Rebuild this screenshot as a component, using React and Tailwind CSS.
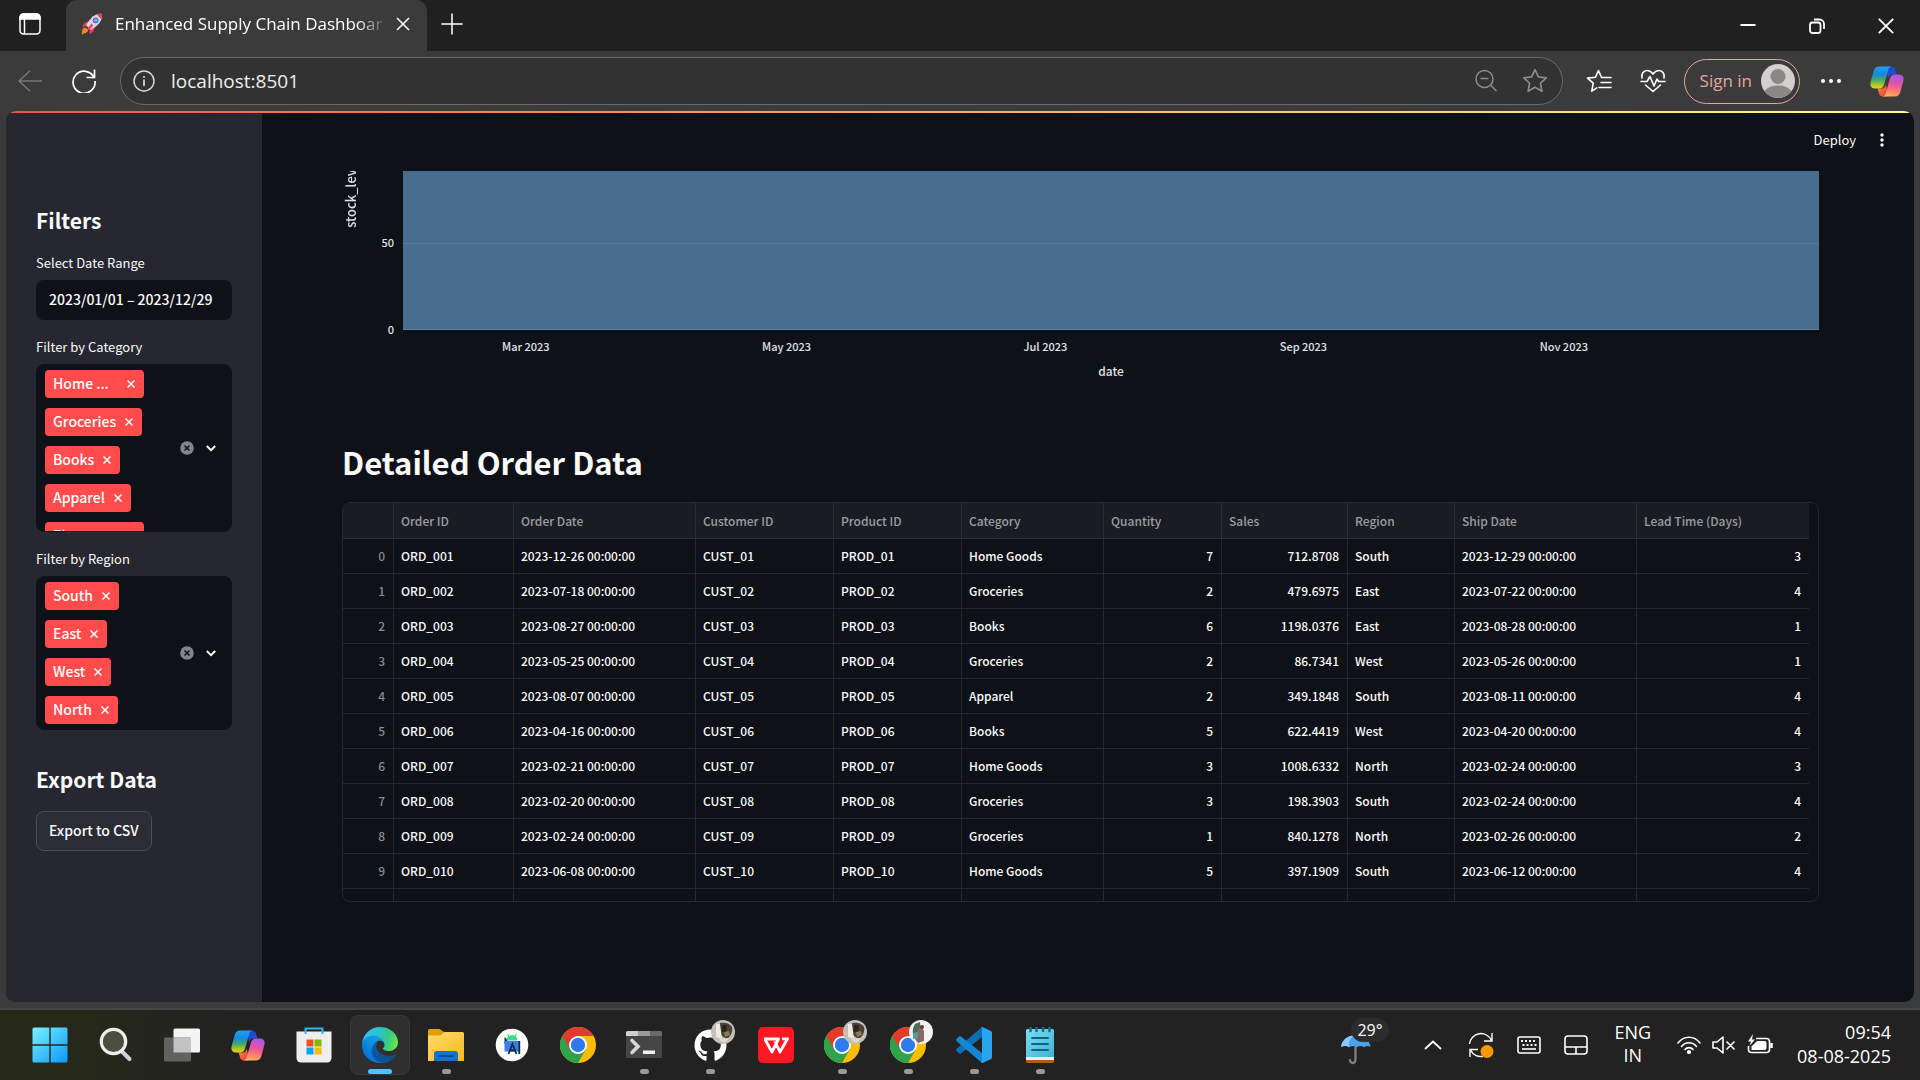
import React, { useId } from "react";
import { FaGithub } from "react-icons/fa";

const UI = "font-['Open_Sans','Noto_Sans',sans-serif]";

function CopilotLogo({ className }) {
  const id = useId();
  const a = `a${id}`, b = `b${id}`, c = `c${id}`, d = `d${id}`;
  return (
    <svg viewBox="0 0 34 31" className={className} aria-hidden="true">
      <defs>
        <linearGradient id={a} x1="0" y1="0" x2="0" y2="1">
          <stop offset="0" stopColor="#1ea2f0" />
          <stop offset="0.35" stopColor="#1b86dc" />
          <stop offset="0.6" stopColor="#3fa873" />
          <stop offset="0.82" stopColor="#a5c52e" />
          <stop offset="1" stopColor="#f5d50a" />
        </linearGradient>
        <linearGradient id={b} x1="0" y1="0" x2="1" y2="1">
          <stop offset="0" stopColor="#1b3fc4" />
          <stop offset="1" stopColor="#1a5fe0" />
        </linearGradient>
        <linearGradient id={c} x1="0.6" y1="0" x2="0.4" y2="1">
          <stop offset="0" stopColor="#a855f0" />
          <stop offset="0.45" stopColor="#e8559b" />
          <stop offset="0.75" stopColor="#ff7f70" />
          <stop offset="1" stopColor="#ffb057" />
        </linearGradient>
        <linearGradient id={d} x1="0" y1="0" x2="1" y2="1">
          <stop offset="0" stopColor="#ff8a4c" />
          <stop offset="1" stopColor="#e23a2f" />
        </linearGradient>
      </defs>
      <path d="M16 .5h5.500c2 0 3 1.500 3.600 3.500l1.300 4.500h-4c-2.400 0-3.600 1.500-4.300 4z" fill={`url(#${b})`} />
      <path d="M18 30.500h-5.500c-2 0-3-1.500-3.600-3.500l-1.300-4.500h4c2.400 0 3.600-1.500 4.300-4z" fill={`url(#${d})`} />
      <path d="M9.500.5h12c-1.800.3-2.700 1.500-3.300 3.500l-4 14c-.9 3-2.200 4.500-5 4.500H5c-4 0-5.300-2.700-4.300-6.500L3.500 5.500C4.400 2.300 6 .5 9.500.5z" fill={`url(#${a})`} />
      <path d="M24.500 30.500h-12c1.800-.3 2.700-1.500 3.300-3.500l4-14c.9-3 2.200-4.500 5-4.500H29c4 0 5.300 2.700 4.300 6.500l-2.800 10.500c-.9 3.200-2.500 5-6 5z" fill={`url(#${c})`} />
    </svg>
  );
}

function Rocket() {
  return (
    <svg viewBox="0 0 22 22" className="size-[22px] shrink-0" aria-hidden="true">
      <path d="M2 15.500c1.800-1.200 3.800-.6 4.700.8.800 1.400.1 2.800-1.500 3.500-1.300.6-3 .9-4.400 2C1 19.500.8 17 2 15.500z" fill="#f28a1c" />
      <path d="M8 8.200c-3 .1-5.500 2-6.700 5.600 2-.8 3.800-.7 5.200.1zM13.700 14c-.1 3-2 5.500-5.500 7.500.7-2.300.6-4.200-.2-5.800z" fill="#f03a5f" />
      <path d="M21 .8C14.500.5 9.800 3.500 5.300 12.200l4.400 4.600C18.500 12.300 21.500 7 21 .8z" fill="#dcd3e2" />
      <path d="M21 .8c-2-.1-3.700.1-5.300.8l4.400 4.500c.8-1.700 1-3.400.9-5.300z" fill="#f03a5f" />
      <circle cx="14.600" cy="7.300" r="2.900" fill="#4f6fb8" />
      <circle cx="14.600" cy="7.300" r="1.800" fill="#5fb8f2" />
      <path d="M10.800 10.500c-1.800 1.700-3.600 4-4.500 7 2.700-1.200 4.500-3 5.800-5.300z" fill="#f03a5f" />
    </svg>
  );
}

function TitleBar() {
  return (
    <header className="flex h-[51px] shrink-0 items-stretch bg-[#202020]">
      <button aria-label="Tab actions" className="grid w-[66px] place-items-center pr-1.5 pb-1">
        <svg viewBox="0 0 22 22" className="size-[22px]" fill="none" stroke="#fff" strokeWidth="1.500">
          <rect x="1" y="1" width="20" height="20" rx="3.500" />
          <path d="M1 4.500A3.500 3.500 0 0 1 4.500 1h13A3.500 3.500 0 0 1 21 4.500V6H1z" fill="#fff" />
          <path d="M5.500 6v15" />
        </svg>
      </button>
      <div className="flex w-[361px] items-center rounded-t-[11px] bg-[#3b3b3b] pb-1 pl-[15px] pr-[17px]">
        <Rocket />
        <span className="ml-3 w-[268px] overflow-hidden whitespace-nowrap text-[17px] leading-6 text-white [mask-image:linear-gradient(to_right,#000_90%,transparent_102%)]">
          Enhanced Supply Chain Dashboar
        </span>
        <button aria-label="Close tab" className="ml-auto shrink-0">
          <svg viewBox="0 0 14 14" className="size-3.5" stroke="#fff" strokeWidth="1.500">
            <path d="M1 1l12 12M13 1L1 13" />
          </svg>
        </button>
      </div>
      <button aria-label="New tab" className="grid w-[50px] place-items-center pb-1">
        <svg viewBox="0 0 22 22" className="size-[22px]" stroke="#fff" strokeWidth="1.500">
          <path d="M11 .5v21M.5 11h21" />
        </svg>
      </button>
      <div className="ml-auto flex">
        <button aria-label="Minimize" className="grid w-[69px] place-items-center pb-0.5">
          <svg viewBox="0 0 16 16" className="size-4" stroke="#fff" strokeWidth="2"><path d="M.5 8h15" /></svg>
        </button>
        <button aria-label="Restore" className="grid w-[69px] place-items-center">
          <svg viewBox="0 0 16 16" className="size-4" fill="none" stroke="#fff" strokeWidth="1.800">
            <rect x="1" y="4.500" width="10.500" height="10.500" rx="2.500" />
            <path d="M5 1.500h5.500a4.500 4.500 0 0 1 4.500 4.500v5" />
          </svg>
        </button>
        <button aria-label="Close" className="grid w-[69px] place-items-center">
          <svg viewBox="0 0 16 16" className="size-4" stroke="#fff" strokeWidth="1.800"><path d="M.8.8l14.400 14.400M15.200.8L.8 15.200" /></svg>
        </button>
      </div>
    </header>
  );
}

const STAR = "M12 1.500l3.100 6.700 7.300.9-5.400 5 1.400 7.300L12 17.800l-6.400 3.600L7 14.100l-5.400-5 7.300-.9z";

function Toolbar() {
  return (
    <nav className="flex h-[60px] shrink-0 items-center bg-[#3b3b3b] pl-[18px] pr-[15px]">
      <button aria-label="Back" className="w-6">
        <svg viewBox="0 0 24 22" className="h-[22px] w-6" fill="none" stroke="#787878" strokeWidth="1.500">
          <path d="M24 11H1M12 .7L1 11l11 10.300" />
        </svg>
      </button>
      <button aria-label="Refresh" className="ml-[30px] w-6">
        <svg viewBox="0 0 24 24" className="size-6" fill="none" stroke="#fff" strokeWidth="1.700">
          <path d="M22 8.500A11 11 0 1 0 23 12M22.500.5v8h-8" />
        </svg>
      </button>
      <div className="ml-6 flex h-12 min-w-0 flex-1 items-center rounded-full border border-[#6a6a6a] bg-[#323232] pl-3 pr-[14px]">
        <svg viewBox="0 0 22 22" className="size-[22px] shrink-0" fill="none" stroke="#d6d6d6" strokeWidth="1.500">
          <circle cx="11" cy="11" r="10" />
          <path d="M11 9.500V16M11 6v1.800" strokeWidth="1.800" />
        </svg>
        <input
          aria-label="Address"
          defaultValue="localhost:8501"
          className="ml-4 min-w-0 flex-1 bg-transparent text-[19px] leading-7 text-[#eeeeee] outline-none"
        />
        <button aria-label="Zoom" className="mr-6">
          <svg viewBox="0 0 24 24" className="size-6" fill="none" stroke="#8c8c8c" strokeWidth="1.500">
            <circle cx="10.500" cy="10" r="8.500" />
            <path d="M16.500 16l6 6M6.500 9.500h8" />
          </svg>
        </button>
        <button aria-label="Add to favorites">
          <svg viewBox="0 0 24 24" className="size-[26px]" fill="none" stroke="#8c8c8c" strokeWidth="1.500" strokeLinejoin="round">
            <path d={STAR} />
          </svg>
        </button>
      </div>
      <button aria-label="Favorites" className="ml-[23px]">
        <svg viewBox="0 0 26 24" className="h-6 w-[26px]" fill="none" stroke="#fff" strokeWidth="1.600" strokeLinejoin="round" strokeLinecap="round">
          <path d="M15.500 8.500L12.500 1.500 9.500 8.200l-8 .9 5.700 5-1.400 8 5-3.200M15.500 8.500h9.500M15 13.500h10M13 18.500h12" />
        </svg>
      </button>
      <button aria-label="Browser essentials" className="ml-7">
        <svg viewBox="0 0 26 24" className="h-6 w-[26px]" fill="none" stroke="#fff" strokeWidth="1.600" strokeLinejoin="round" strokeLinecap="round">
          <path d="M2 9C1 5 3.500 1.500 7 1.500c2.500 0 4.500 1.300 6 3.500 1.500-2.200 3.500-3.500 6-3.500 3.500 0 6 3.500 5 7.500M5.500 16l7.500 6.500 7.500-6.500M1 12.500h6l3-5 4 9.500 3-7 1.500 2.500H25" />
        </svg>
      </button>
      <button className="ml-[18px] flex h-[45px] items-center gap-[9px] rounded-full border border-[#e9a49d] pl-[15px] pr-1 text-[17px] text-[#e9a49d]">
        Sign in
        <svg viewBox="0 0 34 34" className="size-[34px]" aria-hidden="true">
          <circle cx="17" cy="17" r="17" fill="#d2d0ce" />
          <circle cx="17" cy="12.500" r="7.500" fill="#8a8886" />
          <path d="M3.500 27.300C6 23.500 11 21.500 17 21.500s11 2 13.500 5.800A17 17 0 0 1 3.500 27.300z" fill="#8a8886" />
        </svg>
      </button>
      <button aria-label="Settings and more" className="ml-[21px]">
        <svg viewBox="0 0 20 4" className="h-1 w-5" fill="#fff">
          <circle cx="2" cy="2" r="2" /><circle cx="10" cy="2" r="2" /><circle cx="18" cy="2" r="2" />
        </svg>
      </button>
      <button aria-label="Copilot" className="ml-[29px] mr-px">
        <CopilotLogo className="h-[31px] w-[34px]" />
      </button>
    </nav>
  );
}

function Tag({ label }) {
  return (
    <span className="flex h-7 shrink-0 items-center rounded bg-[#ff4b4b] pl-2 pr-[9px] text-[14px] leading-7 text-white">
      <span className={`pb-0.5 ${label.endsWith("...") ? "w-[65px]" : ""}`}>{label}</span>
      <button aria-label={`Remove ${label}`} className="ml-[9px]">
        <svg viewBox="0 0 8 8" className="size-2" stroke="#fff" strokeWidth="1.500"><path d="M.5.5l7 7M7.500.5l-7 7" /></svg>
      </button>
    </span>
  );
}

function MultiSelect({ label, values, clipped }) {
  return (
    <fieldset className="mt-[17px]">
      <legend className="text-[13px] font-normal leading-5">{label}</legend>
      <div
        className={`mt-[7px] flex items-center overflow-hidden rounded-lg border border-[#0e1117] bg-[#0e1117] pl-2 pr-[15px] ${clipped ? "h-[168px]" : ""}`}
      >
        <div className="flex flex-1 flex-col items-start gap-2.5 self-start py-[5px] font-medium">
          {values.map((v) => <Tag key={v} label={v} />)}
        </div>
        <button aria-label="Clear all">
          <svg viewBox="0 0 14 14" className="size-3.5">
            <circle cx="7" cy="7" r="6.800" fill="#808495" />
            <path d="M4.500 4.500l5 5M9.500 4.500l-5 5" stroke="#0e1117" strokeWidth="1.500" />
          </svg>
        </button>
        <button aria-label="Open" className="ml-3">
          <svg viewBox="0 0 10 7" className="h-[7px] w-2.5" fill="none" stroke="#fafafa" strokeWidth="2"><path d="M.8 1L5 5.200 9.200 1" /></svg>
        </button>
      </div>
    </fieldset>
  );
}

function Sidebar() {
  return (
    <aside className="w-64 shrink-0 bg-[#262730] px-[30px] pt-[91px] font-medium">
      <h2 className="text-[21px] font-semibold leading-8">Filters</h2>
      <label htmlFor="range" className="mt-[17px] block text-[13px] font-normal leading-5">Select Date Range</label>
      <input
        id="range"
        defaultValue="2023/01/01 – 2023/12/29"
        className="mt-[7px] block h-10 w-full rounded-lg bg-[#0e1117] px-[13px] pb-0.5 text-[14px] outline-none"
      />
      <MultiSelect label="Filter by Category" values={["Home ...", "Groceries", "Books", "Apparel", "Electro..."]} clipped />
      <MultiSelect label="Filter by Region" values={["South", "East", "West", "North"]} />
      <h2 className="mt-[33px] text-[21px] font-semibold leading-8">Export Data</h2>
      <button className="mt-4 h-10 rounded-lg border border-[#4c4d56] bg-[#2b2c36] px-3 pb-0.5 text-[14px] leading-6">Export to CSV</button>
    </aside>
  );
}

function Chart() {
  return (
    <figure className="flex items-start font-medium text-[#e0e1e6]" aria-label="Stock level over time">
      <div className="flex h-[57px] w-5 shrink-0 items-end overflow-hidden">
        <span className="rotate-180 whitespace-nowrap text-[13px] leading-[18px] [writing-mode:vertical-rl]">stock_level</span>
      </div>
      <div className="flex w-[41px] shrink-0 flex-col items-end gap-[71px] pr-[9px] pt-[63px] text-[11px] leading-4">
        <span>50</span>
        <span>0</span>
      </div>
      <div className="flex-1">
        <div className="h-[159px] border-b border-[#5a80a3] bg-[#496d8f]">
          <div className="h-[73px] border-b border-[#567a9c]" />
        </div>
        <div className="mt-2 flex justify-between pl-[99px] pr-[231px] text-[11px] leading-4">
          {["Mar 2023", "May 2023", "Jul 2023", "Sep 2023", "Nov 2023"].map((m) => <span key={m}>{m}</span>)}
        </div>
        <div className="mt-[9px] text-center text-[12px] leading-4">date</div>
      </div>
    </figure>
  );
}

const COLS = [
  ["", "w-[51px]"],
  ["Order ID", "w-[120px]"],
  ["Order Date", "w-[182px]"],
  ["Customer ID", "w-[138px]"],
  ["Product ID", "w-[128px]"],
  ["Category", "w-[142px]"],
  ["Quantity", "w-[118px]"],
  ["Sales", "w-[126px]"],
  ["Region", "w-[107px]"],
  ["Ship Date", "w-[182px]"],
  ["Lead Time (Days)", ""],
];

const T = " 00:00:00";
const ROWS = [
  ["0", "ORD_001", "2023-12-26" + T, "CUST_01", "PROD_01", "Home Goods", "7", "712.8708", "South", "2023-12-29" + T, "3"],
  ["1", "ORD_002", "2023-07-18" + T, "CUST_02", "PROD_02", "Groceries", "2", "479.6975", "East", "2023-07-22" + T, "4"],
  ["2", "ORD_003", "2023-08-27" + T, "CUST_03", "PROD_03", "Books", "6", "1198.0376", "East", "2023-08-28" + T, "1"],
  ["3", "ORD_004", "2023-05-25" + T, "CUST_04", "PROD_04", "Groceries", "2", "86.7341", "West", "2023-05-26" + T, "1"],
  ["4", "ORD_005", "2023-08-07" + T, "CUST_05", "PROD_05", "Apparel", "2", "349.1848", "South", "2023-08-11" + T, "4"],
  ["5", "ORD_006", "2023-04-16" + T, "CUST_06", "PROD_06", "Books", "5", "622.4419", "West", "2023-04-20" + T, "4"],
  ["6", "ORD_007", "2023-02-21" + T, "CUST_07", "PROD_07", "Home Goods", "3", "1008.6332", "North", "2023-02-24" + T, "3"],
  ["7", "ORD_008", "2023-02-20" + T, "CUST_08", "PROD_08", "Groceries", "3", "198.3903", "South", "2023-02-24" + T, "4"],
  ["8", "ORD_009", "2023-02-24" + T, "CUST_09", "PROD_09", "Groceries", "1", "840.1278", "North", "2023-02-26" + T, "2"],
  ["9", "ORD_010", "2023-06-08" + T, "CUST_10", "PROD_10", "Home Goods", "5", "397.1909", "South", "2023-06-12" + T, "4"],
  ["", "", "", "", "", "", "", "", "", "", ""],
];
const NUMERIC = [0, 6, 7, 10];

function OrderTable() {
  return (
    <div className="mt-[18px] h-[400px] overflow-hidden rounded-lg border border-[#26282d] pr-[9px]">
      <table className="w-full table-fixed border-separate border-spacing-0 whitespace-nowrap text-[12px] leading-5">
        <thead>
          <tr>
            {COLS.map(([name, w], i) => (
              <th key={i} className={`h-9 border-b border-[#2b2d33] bg-[#1a1c23] px-[7px] text-left font-medium text-[#9c9da1] ${i < 10 ? "border-r" : ""} ${w}`}>
                {name}
              </th>
            ))}
          </tr>
        </thead>
        <tbody className="font-medium">
          {ROWS.map((row, r) => (
            <tr key={r}>
              {row.map((cell, i) => (
                <td
                  key={i}
                  className={`h-[35px] border-b border-[#26282d] pl-[7px] pr-2 ${i < 10 ? "border-r" : ""} ${NUMERIC.includes(i) ? "text-right" : ""} ${i === 0 ? "text-[#8b8c91]" : "text-[#fafafa]"}`}
                >
                  {cell}
                </td>
              ))}
            </tr>
          ))}
        </tbody>
      </table>
    </div>
  );
}

function Page() {
  return (
    <div className="mx-1.5 flex min-h-0 flex-1 flex-col overflow-hidden rounded-[10px] bg-[#0e1117] font-['Noto_Sans_CJK_SC','Noto_Sans',sans-serif] text-[#fafafa]">
      <div className="h-0.5 shrink-0 bg-linear-to-r from-[#ff4b4b] to-[#fffd80]" />
      <div className="flex min-h-0 flex-1">
        <Sidebar />
        <main className="min-w-0 flex-1">
          <div className="flex h-[58px] items-center justify-end pr-[30px] pb-1">
            <button className="text-[13px] leading-5">Deploy</button>
            <button aria-label="Main menu" className="ml-6">
              <svg viewBox="0 0 4 14" className="h-3.5 w-1" fill="#fafafa">
                <circle cx="2" cy="2" r="1.700" /><circle cx="2" cy="7" r="1.700" /><circle cx="2" cy="12" r="1.700" />
              </svg>
            </button>
          </div>
          <div className="pl-20 pr-[95px]">
            <Chart />
            <h1 className="mt-[61px] text-[31px] font-semibold leading-[44px]">Detailed Order Data</h1>
            <OrderTable />
          </div>
        </main>
      </div>
    </div>
  );
}

function WindowsLogo() {
  const id = useId();
  return (
    <svg viewBox="0 0 36 36" className="size-9">
      <linearGradient id={id} gradientUnits="userSpaceOnUse" x1="0" y1="0" x2="36" y2="36">
        <stop offset="0" stopColor="#7af3ff" /><stop offset="1" stopColor="#0a95ff" />
      </linearGradient>
      <path fill={`url(#${id})`} d="M2 .5h15.300v16.800H.5V2A1.500 1.500 0 0 1 2 .5zM18.700.5H34A1.500 1.500 0 0 1 35.500 2v15.300H18.700zM.5 18.700h16.800v16.800H2A1.500 1.500 0 0 1 .5 34zM18.700 18.700h16.800V34a1.500 1.500 0 0 1-1.500 1.500H18.700z" />
    </svg>
  );
}

function SearchLogo() {
  return (
    <svg viewBox="0 0 36 36" className="size-9">
      <path d="M24.500 25l7 7" stroke="#d0d0dc" strokeWidth="4" strokeLinecap="round" />
      <circle cx="15.500" cy="14.500" r="12.200" fill="#4c4e40" stroke="#eceef0" strokeWidth="3.200" />
    </svg>
  );
}

function TaskViewLogo() {
  return (
    <svg viewBox="0 0 36 36" className="size-9">
      <rect x="9.500" y="1.500" width="26.500" height="24" rx="1.500" fill="#f4f4f4" />
      <rect x="0" y="10.500" width="27" height="24" rx="1.500" fill="#626262" />
      <path d="M9.500 10.500H27v15H9.500z" fill="#c2c2c2" />
    </svg>
  );
}

function StoreLogo() {
  return (
    <svg viewBox="0 0 36 36" className="size-9">
      <path d="M.5 4.500h35V31a4.500 4.500 0 0 1-4.500 4.500H5A4.500 4.500 0 0 1 .5 31z" fill="#eeeeee" />
      <path d="M9.500 7V1.500h17V7" fill="none" stroke="#35b3e6" strokeWidth="2" />
      <path d="M10.500 12.500h7v7h-7z" fill="#f25022" /><path d="M18.500 12.500h7v7h-7z" fill="#7fba00" />
      <path d="M10.500 20.500h7v7h-7z" fill="#00a4ef" /><path d="M18.500 20.500h7v7h-7z" fill="#ffb900" />
    </svg>
  );
}

function EdgeLogo() {
  const id = useId();
  return (
    <svg viewBox="0 0 256 256" className="size-9">
      <defs>
        <linearGradient id={`a${id}`} gradientUnits="userSpaceOnUse" x1="63" y1="178" x2="241" y2="178">
          <stop offset="0" stopColor="#0c59a4" /><stop offset="1" stopColor="#114a8b" />
        </linearGradient>
        <linearGradient id={`b${id}`} gradientUnits="userSpaceOnUse" x1="157" y1="100" x2="46" y2="221">
          <stop offset="0" stopColor="#1b9de2" /><stop offset="0.3" stopColor="#1595df" /><stop offset="1" stopColor="#0078d7" />
        </linearGradient>
        <linearGradient id={`c${id}`} gradientUnits="userSpaceOnUse" x1="10" y1="60" x2="250" y2="120">
          <stop offset="0" stopColor="#35c1f1" /><stop offset="0.4" stopColor="#2bc3d2" /><stop offset="0.7" stopColor="#36c98a" /><stop offset="1" stopColor="#66eb45" />
        </linearGradient>
      </defs>
      <path fill={`url(#a${id})`} d="M235.700 195.500a93.700 93.700 0 0 1-10.600 4.700 101.900 101.900 0 0 1-35.900 6.400c-47.300 0-88.500-32.500-88.500-74.300a31.500 31.500 0 0 1 16.400-27.300c-42.800 1.800-53.800 46.400-53.800 72.500 0 74 68.100 81.400 82.800 81.400 7.900 0 19.800-2.300 27-4.600l1.300-.4a128.300 128.300 0 0 0 66.600-52.800 4 4 0 0 0-5.300-5.600z" />
      <path fill={`url(#b${id})`} d="M105.700 241.400a79.200 79.200 0 0 1-22.700-21.300 80.700 80.700 0 0 1 29.500-120c3.200-1.500 8.500-4.100 15.600-4a32.400 32.400 0 0 1 25.700 13 31.900 31.900 0 0 1 6.300 18.700c0-.2 24.500-79.600-80-79.600-43.900 0-80 41.600-80 78.200a130.200 130.200 0 0 0 12.100 56 128 128 0 0 0 156.400 67 75.500 75.500 0 0 1-62.800-8z" />
      <path fill={`url(#c${id})`} d="M152.300 148.900c-.9 1-3.400 2.500-3.400 5.600 0 2.600 1.700 5.200 4.800 7.300 14.300 10 41.400 8.600 41.500 8.600a59.600 59.600 0 0 0 30.300-8.300 61.400 61.400 0 0 0 30.400-52.900c.3-22.400-8-37.300-11.300-43.900C223.300 23.900 177.400 0 128 0A128 128 0 0 0 0 126.200c.5-36.500 36.800-66 80-66 3.500 0 23.500.3 42 10.100a72.600 72.600 0 0 1 30.900 29.300c6.100 10.600 7.200 24.100 7.200 29.500s-2.700 13.300-7.800 19.800z" />
    </svg>
  );
}

function FolderLogo() {
  const id = useId();
  return (
    <svg viewBox="0 0 36 36" className="size-9">
      <defs>
        <linearGradient id={id} x1="0" y1="0" x2="1" y2="1">
          <stop offset="0" stopColor="#ffda70" /><stop offset="1" stopColor="#f9b91c" />
        </linearGradient>
      </defs>
      <path d="M0 3.500A1.500 1.500 0 0 1 1.500 2H11c2 0 3 2.500 5 3v4H0z" fill="#e0a000" />
      <path d="M0 8.500h12c1.500 0 3-3.500 5-3.500h17.500A1.500 1.500 0 0 1 36 6.500V34H0z" fill={`url(#${id})`} />
      <path d="M6 34V27a3 3 0 0 1 3-3h18a3 3 0 0 1 3 3v7z" fill="#1173cc" />
      <path d="M11 29h14" stroke="#0a4f96" strokeWidth="2" strokeLinecap="round" />
    </svg>
  );
}

function AndroidStudioLogo() {
  return (
    <svg viewBox="0 0 36 36" className="size-9">
      <circle cx="18" cy="18" r="16.300" fill="#fff" />
      <path d="M10.500 10l3 3v4h-3z" fill="#073042" />
      <path d="M10.500 14H26v10.500H10.500z" fill="#3f7ee8" />
      <path d="M12.500 13.500a5.500 5.500 0 0 1 11 0z" fill="#3ddc84" />
      <path d="M13.500 6.800l1.500 2.500M22.500 6.800l-1.500 2.500" stroke="#3ddc84" strokeWidth="1.200" />
      <path d="M14.500 27L18.500 17l4 10M16 23.500h5M25.300 14v13" stroke="#073042" strokeWidth="1.800" fill="none" />
    </svg>
  );
}

function Chrome() {
  return (
    <svg viewBox="0 0 36 36" className="size-9">
      <circle cx="18" cy="18" r="18" fill="#fbbc05" />
      <path d="M18 18L2.410 9A18 18 0 0 0 18 36l7.800-13.500z" fill="#2fa24c" />
      <path d="M2.410 9A18 18 0 0 1 33.590 9H18l-7.800 13.500z" fill="#e33b2e" />
      <circle cx="18" cy="18" r="9" fill="#fff" />
      <circle cx="18" cy="18" r="7.200" fill="#2f7bed" />
    </svg>
  );
}

function PhotoBadge({ alt }) {
  return (
    <svg viewBox="0 0 24 24" className="absolute -top-[7px] left-[19px] size-6">
      {alt ? (
        <>
          <circle cx="12" cy="12" r="12" fill="#f1f2f1" />
          <path d="M6 4l5-2 1 10-6 7C3 15 3 8 6 4z" fill="#4c6b52" />
          <path d="M10 8h3l2 3v10l-6 2-3-4z" fill="#8a6468" />
          <path d="M4 13l5-1v6l-5 1z" fill="#52a09a" />
          <circle cx="13" cy="7" r="2" fill="#5c3f38" />
        </>
      ) : (
        <>
          <circle cx="12" cy="12" r="12" fill="#c4bfb9" />
          <path d="M9 3c4-1 10 0 12 4 1 4-1 9-4 11-5 1-8-4-8-8z" fill="#4a4238" />
          <path d="M11 5h5l-1 7h-4z" fill="#2a251f" />
          <path d="M5 4h4l2 15-6-2z" fill="#ece8e4" />
          <path d="M13 12l5-1 1 4-5 2z" fill="#8c7a52" />
          <path d="M8 19l10-1-3 4c-3 1-5 0-7-3z" fill="#ddd8d2" />
        </>
      )}
    </svg>
  );
}

function TerminalLogo() {
  return (
    <svg viewBox="0 0 36 36" className="size-9">
      <rect x="0" y="4" width="36" height="27" rx="1.500" fill="#454545" />
      <path d="M0 9V5.500A1.500 1.500 0 0 1 1.500 4H12v5z" fill="#cfcfcf" /><path d="M12 4h12v5H12z" fill="#9a9a9a" /><path d="M24 4h10.500A1.500 1.500 0 0 1 36 5.500V9H24z" fill="#6a6a6a" />
      <path d="M6 13.500l6 6-6 6" fill="none" stroke="#d8d8d8" strokeWidth="3.600" strokeLinecap="round" />
      <path d="M17 23.500h12v3.500H17z" fill="#f0f0f0" />
    </svg>
  );
}

function WpsLogo() {
  return (
    <svg viewBox="0 0 36 36" className="size-9">
      <rect width="36" height="36" rx="5" fill="#ff1722" />
      <path d="M6 12h14.500L14 25 7 12.500M17 14.500L22 25 29.500 11.800H24" fill="none" stroke="#fff" strokeWidth="2.800" strokeLinejoin="round" />
    </svg>
  );
}

function CodeLogo() {
  return (
    <svg viewBox="0 0 36 36" className="size-9">
      <path d="M26 0v10L5 26.500c-.7.500-1.500.4-2-.1l-2.300-2.200c-.8-.7-.8-1.700 0-2.400z" fill="#0f6fb3" />
      <path d="M26 36V26L5 9.500c-.7-.5-1.500-.4-2 .1L.7 11.800c-.8.7-.8 1.700 0 2.400z" fill="#1387cf" />
      <path d="M25 0l2 .2L35 4c.7.400 1 1 1 1.800v24.400c0 .8-.3 1.400-1 1.800l-8 3.800-2 .2 1-1.500v-33z" fill="#28a5f2" />
    </svg>
  );
}

function NotepadLogo() {
  const id = useId();
  return (
    <svg viewBox="0 0 36 36" className="size-9">
      <defs>
        <linearGradient id={id} x1="0" y1="0" x2="1" y2="1">
          <stop offset="0" stopColor="#7edcf2" /><stop offset="1" stopColor="#3fb3d6" />
        </linearGradient>
      </defs>
      <path d="M4 32h28v2.500A1.500 1.500 0 0 1 30.500 36h-25A1.500 1.500 0 0 1 4 34.500z" fill="#b35a14" />
      <path d="M4 28h28v5H4z" fill="#f0eef0" />
      <path d="M4 3.500A1.500 1.500 0 0 1 5.500 2h25A1.500 1.500 0 0 1 32 3.500V30H4z" fill={`url(#${id})`} />
      <path d="M10 11h16M10 17h16M10 23h16" stroke="#0b6480" strokeWidth="1.800" strokeLinecap="round" />
      <path d="M8.500 1v3M14.500 1v3M21 1v3M27.500 1v3" stroke="#12708c" strokeWidth="2.600" strokeLinecap="round" />
    </svg>
  );
}

const APPS = [
  { name: "Start", icon: <WindowsLogo /> },
  { name: "Search", icon: <SearchLogo /> },
  { name: "Task View", icon: <TaskViewLogo /> },
  { name: "Copilot", icon: <CopilotLogo className="h-[31px] w-[34px]" /> },
  { name: "Store", icon: <StoreLogo /> },
  { name: "Edge", icon: <EdgeLogo />, active: true },
  { name: "File Explorer", icon: <FolderLogo />, open: true },
  { name: "Android Studio", icon: <AndroidStudioLogo /> },
  { name: "Chrome", icon: <Chrome /> },
  { name: "Terminal", icon: <TerminalLogo />, open: true },
  { name: "GitHub", icon: <><FaGithub className="size-[33px] text-white" /><PhotoBadge /></>, open: true },
  { name: "WPS Office", icon: <WpsLogo /> },
  { name: "Chrome profile 1", icon: <><Chrome /><PhotoBadge /></>, open: true },
  { name: "Chrome profile 2", icon: <><Chrome /><PhotoBadge alt /></>, open: true },
  { name: "Visual Studio Code", icon: <CodeLogo />, open: true },
  { name: "Notepad", icon: <NotepadLogo />, open: true },
];

function Tray() {
  return (
    <div className="ml-auto flex items-center text-[18px] leading-6 text-white">
      <button className="relative h-[60px] w-[60px] text-[16px]" aria-label="Weather">
        <svg viewBox="0 0 30 32" className="absolute left-1.5 top-[18px] h-8 w-[30px]">
          <path d="M14.500 12v14.500c0 4.500-5.500 4.500-5.500.5" fill="none" stroke="#7c7c7c" strokeWidth="2.400" strokeLinecap="round" />
          <path d="M0 14C1 7 6 3 13 2.500c1-1.500 2-1.500 2.500 0C23 3 29 8 29.500 14c-2-1.500-4.500-1.500-6.500.3-2-1.800-4.500-1.800-7 0-2.500-1.800-5-1.800-8 0C6 12.500 2.500 12.500 0 14z" fill="#4aa3ea" />
          <path d="M0 14C1 7 6 3 13 2.500 9 5 7.500 9 8 14.300 6 12.500 2.500 12.500 0 14z" fill="#8cc8fa" />
        </svg>
        <span className="absolute left-4 top-[3px] rounded-full bg-[#2c2c2c] px-1.5">29°</span>
      </button>
      <button aria-label="Show hidden icons" className="ml-[29px]">
        <svg viewBox="0 0 18 10" className="h-2.5 w-[18px]" fill="none" stroke="#fff" strokeWidth="1.800"><path d="M1 9l8-7.500L17 9" /></svg>
      </button>
      <button aria-label="Update available" className="ml-[26px]">
        <svg viewBox="0 0 26 26" className="size-[26px]" fill="none" stroke="#fff" strokeWidth="1.400">
          <path d="M1.500 12A11.500 11.500 0 0 1 23.500 8.500M24 1v8h-8M15 24.300A11.500 11.500 0 0 1 2.500 18M2 25v-7.500h8" />
          <circle cx="19" cy="19.500" r="6.500" fill="#ff9800" stroke="none" />
        </svg>
      </button>
      <button aria-label="Touch keyboard" className="ml-[23px]">
        <svg viewBox="0 0 24 18" className="h-[18px] w-6" fill="none" stroke="#fff" strokeWidth="1.600">
          <rect x="1" y="1" width="22" height="16" rx="2" />
          <path d="M4 5h16M5.500 9h14" strokeDasharray="2 2" strokeWidth="1.800" /><path d="M5 13h14" />
        </svg>
      </button>
      <button aria-label="Virtual touchpad" className="ml-[23px]">
        <svg viewBox="0 0 24 20" className="h-5 w-6" fill="none" stroke="#fff" strokeWidth="1.600">
          <rect x="1" y="1" width="22" height="18" rx="3" /><path d="M1 12h22M12 12v7" />
        </svg>
      </button>
      <button className="ml-[26px] pb-0.5 text-center leading-[23px]">ENG<br />IN</button>
      <button aria-label="Network, sound and battery" className="ml-[26px] flex items-center gap-[11px]">
        <svg viewBox="0 0 24 18" className="h-[18px] w-6" fill="none" stroke="#fff" strokeWidth="1.600" strokeLinecap="round">
          <path d="M1 7C7-.7 17-.7 23 7M4.500 10.500c4-5 11-5 15 0M8 13.500c2-2.500 6-2.500 8 0" /><circle cx="12" cy="16" r="1.300" fill="#fff" />
        </svg>
        <svg viewBox="0 0 24 20" className="h-5 w-6" fill="none" stroke="#fff" strokeWidth="1.600" strokeLinejoin="round">
          <path d="M1 7h4l6-5v16l-6-5H1zM14.500 6.500l8 8M22.500 6.500l-8 8" />
        </svg>
        <svg viewBox="0 0 26 22" className="h-[22px] w-[26px]" fill="none" stroke="#fff" strokeWidth="1.600">
          <path d="M9 4.500h10.500a3 3 0 0 1 3 3v8a3 3 0 0 1-3 3h-15a3 3 0 0 1-3-3V12" /><path d="M24.500 9v5" strokeWidth="2.500" />
          <path d="M10 7h7.500a2 2 0 0 1 2 2v5a2 2 0 0 1-2 2H4.500v-3.500z" fill="#fff" stroke="none" /><path d="M6 0L1 7.500h3L2.500 12 8 5.500H5z" fill="#fff" stroke="none" />
        </svg>
      </button>
      <button className="ml-6 pb-0.5 pr-[29px] text-right">09:54<br />08-08-2025</button>
    </div>
  );
}

function Taskbar() {
  return (
    <footer className="flex h-[70px] shrink-0 items-center bg-[#222222] bg-linear-to-r from-[#26281a] from-5% to-[#222222] to-12% pl-[17px]">
      {APPS.map((app) => (
        <div key={app.name} className="flex w-[66px] justify-center">
          <button
            aria-label={app.name}
            className={`flex size-[60px] flex-col items-center rounded-lg ${app.active ? "border border-[#383838] bg-[#2f2f2f]" : "border border-transparent"}`}
          >
            <span className="relative mt-[11px] flex size-9 items-center justify-center">{app.icon}</span>
            {app.active && <span className="mt-1.5 h-[5px] w-6 rounded-full bg-[#4cc2ff]" />}
            {app.open && <span className="mt-1.5 h-[5px] w-[9px] rounded-full bg-[#9a9a9a]" />}
          </button>
        </div>
      ))}
      <Tray />
    </footer>
  );
}

export default function App() {
  return (
    <div className={`flex h-screen flex-col overflow-hidden bg-[#3b3b3b] ${UI}`}>
      <TitleBar />
      <Toolbar />
      <Page />
      <div className="h-2 shrink-0 border-b-2 border-[#464646]" />
      <Taskbar />
    </div>
  );
}
